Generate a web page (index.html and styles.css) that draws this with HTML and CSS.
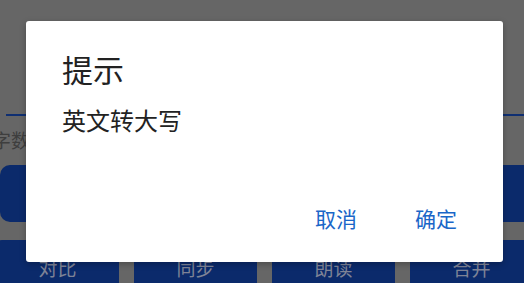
FILE: index.html
```html
<!DOCTYPE html>
<html lang="zh-CN">
<head>
<meta charset="utf-8">
<title>提示</title>
<link rel="stylesheet" href="styles.css">
</head>
<body>
<div class="page">
  <div class="tabline"></div>
  <div class="label">字数</div>
  <div class="main-btn"></div>
  <div class="row">
    <div class="btn">对比</div>
    <div class="btn">同步</div>
    <div class="btn">朗读</div>
    <div class="btn">合并</div>
  </div>
</div>
<div class="dialog">
  <div class="title">提示</div>
  <div class="message">英文转大写</div>
  <div class="actions">
    <span class="action">取消</span>
    <span class="action">确定</span>
  </div>
</div>
</body>
</html>
```
FILE: styles.css
```css
html, body {
  margin: 0;
  padding: 0;
}
body {
  width: 524px;
  height: 283px;
  overflow: hidden;
  background: #666666;
  font-family: "Noto Sans CJK SC", "Noto Sans", sans-serif;
  position: relative;
}
.page {
  display: flex;
  flex-direction: column;
  padding-top: 114px;
}
.tabline {
  height: 2px;
  margin-left: 6px;
  background: #0f2f72;
}
.label {
  margin-top: 14px;
  margin-left: -8px;
  font-size: 19px;
  line-height: 19px;
  color: #3e3e3e;
}
.main-btn {
  margin-top: 16px;
  height: 57px;
  margin-right: -20px;
  border-radius: 10px;
  background: #0b2a6b;
}
.row {
  margin-top: 18px;
  margin-left: -4px;
  display: flex;
  gap: 15px;
}
.btn {
  flex: 0 0 123px;
  height: 50px;
  border-radius: 6px;
  background: #0b2a6b;
  color: #7e8396;
  font-size: 19px;
  line-height: 19px;
  padding-top: 18px;
  box-sizing: border-box;
  text-align: center;
}
.dialog {
  position: absolute;
  left: 26px;
  top: 21px;
  width: 477px;
  height: 241px;
  box-sizing: border-box;
  background: #ffffff;
  border-radius: 3px;
  box-shadow: 0 2px 6px rgba(0,0,0,0.25);
  padding: 32px 46px 0 36px;
  display: flex;
  flex-direction: column;
}
.title {
  font-size: 31px;
  line-height: 31px;
  color: #222222;
}
.message {
  margin-top: 24px;
  font-size: 24px;
  line-height: 24px;
  color: #222222;
}
.actions {
  margin-top: auto;
  margin-bottom: 33px;
  display: flex;
  justify-content: flex-end;
  gap: 58px;
}
.action {
  font-size: 21px;
  line-height: 21px;
  color: #1a66c8;
}
```
